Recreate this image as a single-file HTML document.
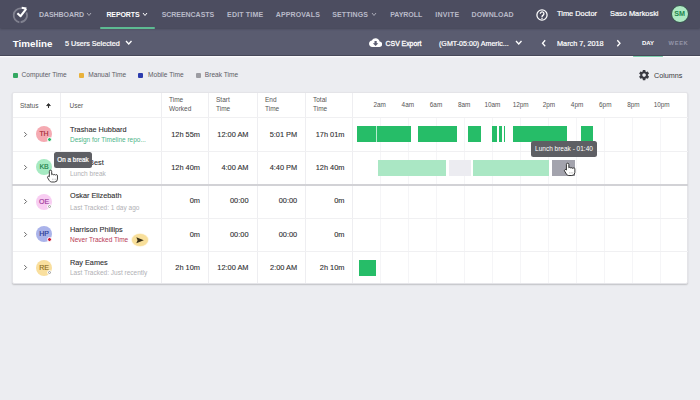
<!DOCTYPE html>
<html><head><meta charset="utf-8">
<style>
*{margin:0;padding:0;box-sizing:border-box}
html,body{width:700px;height:400px;overflow:hidden;background:#ecedf1;font-family:"Liberation Sans",sans-serif;position:relative}
.a{position:absolute;white-space:nowrap}
#nav{position:absolute;left:0;top:0;width:700px;height:28px;background:#4c4d60;box-shadow:0 1px 2px rgba(30,30,40,.35)}
#sub{position:absolute;left:0;top:28px;width:700px;height:28.3px;background:#5a5c70;box-shadow:inset 0 -1px 0 #474859,0 1.3px 0 #fbfbfd}
.nv{position:absolute;top:10px;font-size:7px;font-weight:bold;color:#b9bac8;line-height:9px}
.nv.on{color:#fff}
.wt{color:#fff}
#tbl{position:absolute;left:12px;top:92px;width:676px;height:192px;background:#fff;border:1px solid #e4e4e8;border-radius:2px;box-shadow:0 1px 1.5px rgba(0,0,0,.18)}
.hl{position:absolute;height:1px;background:#f0f0f2}
.vl{position:absolute;width:1px;background:#eeeef1}
.hd{position:absolute;font-size:6.5px;color:#555;line-height:8.5px}
.cell{position:absolute;font-size:7.4px;color:#2e2e30;text-align:right;line-height:9px;-webkit-text-stroke:0.1px #2e2e30}
.nm{position:absolute;font-size:7.3px;color:#2e2e30;line-height:9px;-webkit-text-stroke:0.1px #2e2e30}
.sm{position:absolute;font-size:6.5px;color:#aaa;line-height:8px}
.av{position:absolute;width:16px;height:16px;border-radius:50%;font-size:7px;text-align:center;line-height:15.5px;-webkit-text-stroke:0.15px currentColor;letter-spacing:-0.1px}
.hr{font-size:6.4px}
.dot{position:absolute;width:5px;height:5px;border-radius:50%;border:1px solid #fff}
.bar{position:absolute;top:126px;height:16px;background:#26bd68}
.bar2{position:absolute;top:160px;height:16px}
.chev{position:absolute;font-size:7px;color:#666}
</style></head><body>
<div id="sub"></div>
<div id="nav"></div>
<!-- logo -->
<svg class="a" style="left:5px;top:0.6px" width="30" height="28" viewBox="0 0 30 28">
 <path d="M21.34 11.34 A7 7 0 0 1 15.61 21.27 M14.39 21.27 A7 7 0 0 1 16.22 7.41" fill="none" stroke="#80818f" stroke-width="1.8"/>
 <path d="M12.4 12.2 L15.6 15.2 L21.2 7.8 M16.6 6.7 L21.4 7.6" fill="none" stroke="#fff" stroke-width="2.1" stroke-linejoin="round"/>
</svg>
<div class="nv" style="left:39px;letter-spacing:-0.062px">DASHBOARD</div>
<div class="nv on" style="left:106.4px;letter-spacing:-0.102px">REPORTS</div>
<div class="a" style="left:99.8px;top:26.9px;width:55.3px;height:2px;background:#5dba92;border-radius:1px"></div>
<div class="nv" style="left:161.7px;letter-spacing:-0.042px">SCREENCASTS</div>
<div class="nv" style="left:227.1px;letter-spacing:0.169px">EDIT TIME</div>
<div class="nv" style="left:275.7px;letter-spacing:0.144px">APPROVALS</div>
<div class="nv" style="left:332.3px;letter-spacing:0.086px">SETTINGS</div>
<div class="nv" style="left:390.2px;letter-spacing:-0.028px">PAYROLL</div>
<div class="nv" style="left:435.2px;letter-spacing:0.292px">INVITE</div>
<div class="nv" style="left:471.6px;letter-spacing:0.000px">DOWNLOAD</div>
<svg class="a" style="left:87.2px;top:12.6px;overflow:visible" width="4" height="2.5" viewBox="0 0 4 2.5"><path d="M0 0L2.0 2.5L4 0" fill="none" stroke="#a9aab6" stroke-width="1"/></svg><svg class="a" style="left:143px;top:12.6px;overflow:visible" width="4" height="2.5" viewBox="0 0 4 2.5"><path d="M0 0L2.0 2.5L4 0" fill="none" stroke="#fff" stroke-width="1"/></svg><svg class="a" style="left:371.5px;top:12.6px;overflow:visible" width="4" height="2.5" viewBox="0 0 4 2.5"><path d="M0 0L2.0 2.5L4 0" fill="none" stroke="#a9aab6" stroke-width="1"/></svg>
<!-- help -->
<svg class="a" style="left:536.3px;top:8.9px" width="12" height="12" viewBox="0 0 12 12"><circle cx="6" cy="6" r="5.1" fill="none" stroke="#fff" stroke-width="1.25"/><path d="M4.3 4.7A1.8 1.8 0 1 1 7.3 6C6.5 6.6 6 6.9 6 7.9" fill="none" stroke="#fff" stroke-width="1.3"/><circle cx="6" cy="9.3" r="0.8" fill="#fff"/></svg>
<div class="a wt" style="left:557px;top:9.4px;font-size:7.4px;line-height:9px;-webkit-text-stroke:0.2px #fff">Time Doctor</div>
<div class="a wt" style="left:610px;top:9.4px;font-size:7.4px;line-height:9px;-webkit-text-stroke:0.2px #fff">Saso Markoski</div>
<div class="a" style="left:670.7px;top:5.25px;width:18px;height:18px;border-radius:50%;background:#ade9c3;border:0.8px solid #34504a;color:#22874e;font-size:7.2px;font-weight:bold;text-align:center;line-height:16.4px">SM</div>

<!-- sub bar -->
<div class="a wt" style="left:12.8px;top:38px;font-size:9.8px;font-weight:bold;line-height:12px">Timeline</div>
<div class="a wt" style="left:65px;top:38.7px;font-size:7.2px;line-height:9px;-webkit-text-stroke:0.2px #fff">5 Users Selected</div>
<svg class="a" style="left:126px;top:41.2px;overflow:visible" width="5.5" height="3" viewBox="0 0 5.5 3"><path d="M0 0L2.75 3L5.5 0" fill="none" stroke="#fff" stroke-width="1.3"/></svg>
<svg class="a" style="left:369px;top:36.3px" width="13.2" height="13.2" viewBox="0 0 24 24"><path fill="#fff" fill-rule="evenodd" d="M19.35 10.04C18.67 6.59 15.64 4 12 4 9.11 4 6.6 5.64 5.35 8.04 2.34 8.36 0 10.91 0 14c0 3.31 2.69 6 6 6h13c2.76 0 5-2.24 5-5 0-2.64-2.05-4.78-4.65-4.96zM17 13l-5 5-5-5h3V9h4v4h3z"/></svg>
<div class="a wt" style="left:385.6px;top:38.8px;font-size:6.95px;letter-spacing:-0.05px;line-height:9px;-webkit-text-stroke:0.3px #fff">CSV Export</div>
<div class="a wt" style="left:439px;top:39.6px;font-size:7.1px;line-height:9px;-webkit-text-stroke:0.2px #fff">(GMT-05:00) Americ...</div>
<svg class="a" style="left:516px;top:41.1px;overflow:visible" width="5.5" height="3" viewBox="0 0 5.5 3"><path d="M0 0L2.75 3L5.5 0" fill="none" stroke="#fff" stroke-width="1.3"/></svg>
<svg class="a" style="left:541.5px;top:39.5px;overflow:visible" width="3.5" height="6.5"><path d="M3.2 0.3L0.5 3.25L3.2 6.2" fill="none" stroke="#fff" stroke-width="1.3"/></svg>
<div class="a wt" style="left:557px;top:39px;font-size:7.3px;line-height:9px;-webkit-text-stroke:0.2px #fff">March 7, 2018</div>
<svg class="a" style="left:617px;top:39.5px;overflow:visible" width="3.5" height="6.5"><path d="M0.3 0.3L3 3.25L0.3 6.2" fill="none" stroke="#fff" stroke-width="1.3"/></svg>
<div class="a wt" style="left:642px;top:39px;font-size:6px;font-weight:bold;line-height:8px">DAY</div>
<div class="a" style="left:668.6px;top:39px;font-size:5.8px;font-weight:bold;line-height:8px;color:#9495a8;letter-spacing:0.6px">WEEK</div>
<div class="a" style="left:633px;top:55.6px;width:30px;height:1.8px;background:#7fcfae;border-radius:1px"></div>

<!-- legend -->
<div class="a" style="left:12.9px;top:72.5px;width:5px;height:5px;border-radius:1px;background:#34a862"></div>
<div class="a" style="left:21.6px;top:70.7px;font-size:6.6px;color:#5c5c66;line-height:8px">Computer Time</div>
<div class="a" style="left:78.9px;top:72.5px;width:5px;height:5px;border-radius:1px;background:#e9b23c"></div>
<div class="a" style="left:88.3px;top:70.7px;font-size:6.6px;color:#5c5c66;line-height:8px">Manual Time</div>
<div class="a" style="left:137.9px;top:72.5px;width:5px;height:5px;border-radius:1px;background:#2c3cae"></div>
<div class="a" style="left:148px;top:70.7px;font-size:6.6px;color:#5c5c66;line-height:8px">Mobile Time</div>
<div class="a" style="left:195.9px;top:72.5px;width:5px;height:5px;border-radius:1px;background:#9c9ca2"></div>
<div class="a" style="left:204.8px;top:70.7px;font-size:6.6px;color:#5c5c66;line-height:8px">Break Time</div>
<svg class="a" style="left:637.9px;top:68.6px" width="12.2" height="12.2" viewBox="0 0 24 24"><path fill="#3a3a42" d="M19.4 13c.04-.33.06-.66.06-1s-.02-.67-.06-1l2.1-1.65c.2-.15.24-.42.12-.64l-2-3.46c-.12-.22-.39-.3-.61-.22l-2.49 1c-.52-.4-1.08-.73-1.69-.98l-.38-2.65C14.46 2.18 14.25 2 14 2h-4c-.25 0-.46.18-.49.42l-.38 2.65c-.61.25-1.17.59-1.69.98l-2.49-1c-.23-.09-.49 0-.61.22l-2 3.46c-.13.22-.07.49.12.64L4.57 11c-.04.33-.07.67-.07 1s.03.67.07 1l-2.11 1.65c-.19.15-.24.42-.12.64l2 3.46c.12.22.39.3.61.22l2.49-1c.52.4 1.08.73 1.69.98l.38 2.65c.03.24.24.42.49.42h4c.25 0 .46-.18.49-.42l.38-2.65c.61-.25 1.17-.59 1.69-.98l2.49 1c.23.09.49 0 .61-.22l2-3.46c.12-.22.07-.49-.12-.64L19.4 13zM12 15.5c-1.93 0-3.5-1.57-3.5-3.5s1.57-3.5 3.5-3.5 3.5 1.57 3.5 3.5-1.57 3.5-3.5 3.5z"/></svg>
<div class="a" style="left:654px;top:71px;font-size:7.2px;color:#3a3a42;line-height:9px">Columns</div>

<!-- table -->
<div id="tbl"></div>
<div class="vl" style="left:380px;top:118px;height:165px;background:#f5f5f7"></div>
<div class="vl" style="left:408px;top:118px;height:165px;background:#f5f5f7"></div>
<div class="vl" style="left:436px;top:118px;height:165px;background:#f5f5f7"></div>
<div class="vl" style="left:464px;top:118px;height:165px;background:#f5f5f7"></div>
<div class="vl" style="left:492px;top:118px;height:165px;background:#f5f5f7"></div>
<div class="vl" style="left:520px;top:118px;height:165px;background:#f5f5f7"></div>
<div class="vl" style="left:548px;top:118px;height:165px;background:#f5f5f7"></div>
<div class="vl" style="left:576px;top:118px;height:165px;background:#f5f5f7"></div>
<div class="vl" style="left:604px;top:118px;height:165px;background:#f5f5f7"></div>
<div class="vl" style="left:632px;top:118px;height:165px;background:#f5f5f7"></div>
<div class="vl" style="left:660px;top:118px;height:165px;background:#f5f5f7"></div>
<div class="vl" style="left:60px;top:93px;height:190px"></div>
<div class="vl" style="left:161px;top:93px;height:190px"></div>
<div class="vl" style="left:208px;top:93px;height:190px"></div>
<div class="vl" style="left:257px;top:93px;height:190px"></div>
<div class="vl" style="left:305px;top:93px;height:190px"></div>
<div class="vl" style="left:352px;top:93px;height:190px"></div>
<div class="hl" style="left:13px;top:117px;width:675px"></div>
<div class="hl" style="left:13px;top:150.5px;width:675px"></div>
<div class="hl" style="left:13px;top:218px;width:675px"></div>
<div class="hl" style="left:13px;top:251px;width:675px"></div>
<div class="hl" style="left:12px;top:183.5px;width:676px;height:2px;background:#d2d2d6"></div>
<div class="hd" style="left:20px;top:101.5px">Status</div>
<svg class="a" style="left:46.2px;top:102.8px" width="5" height="5.4" viewBox="0 0 5 5.4"><path d="M2.5 5.3V2M2.5 0.6L0.7 2.6H4.3Z" stroke="#333" stroke-width="1" fill="#333" stroke-linejoin="round"/></svg>
<div class="hd" style="left:69.5px;top:101.5px">User</div>
<div class="hd" style="left:169px;top:96px">Time<br>Worked</div>
<div class="hd" style="left:216px;top:96px">Start<br>Time</div>
<div class="hd" style="left:265px;top:96px">End<br>Time</div>
<div class="hd" style="left:313px;top:96px">Total<br>Time</div>
<div class="hd hr" style="left:359.60px;width:40px;text-align:center;top:101px">2am</div>
<div class="hd hr" style="left:387.81px;width:40px;text-align:center;top:101px">4am</div>
<div class="hd hr" style="left:416.02px;width:40px;text-align:center;top:101px">6am</div>
<div class="hd hr" style="left:444.23px;width:40px;text-align:center;top:101px">8am</div>
<div class="hd hr" style="left:472.44px;width:40px;text-align:center;top:101px">10am</div>
<div class="hd hr" style="left:500.65px;width:40px;text-align:center;top:101px">12pm</div>
<div class="hd hr" style="left:528.86px;width:40px;text-align:center;top:101px">2pm</div>
<div class="hd hr" style="left:557.07px;width:40px;text-align:center;top:101px">4pm</div>
<div class="hd hr" style="left:585.28px;width:40px;text-align:center;top:101px">6pm</div>
<div class="hd hr" style="left:613.49px;width:40px;text-align:center;top:101px">8pm</div>
<div class="hd hr" style="left:641.70px;width:40px;text-align:center;top:101px">10pm</div>
<svg class="a" style="left:23.5px;top:131.8px;overflow:visible" width="3" height="5"><path d="M0.3 0.2L2.6 2.5L0.3 4.8" fill="none" stroke="#666" stroke-width="1"/></svg>
<div class="av" style="left:36px;top:126.30000000000001px;background:#f5aab2;color:#a52c38">TH</div>
<div class="dot" style="left:46.7px;top:136.8px;width:5.2px;height:5.2px;border:0.9px solid #fff;background:#2ab964"></div>
<div class="nm" style="left:70px;top:124.5px">Trashae Hubbard</div>
<div class="sm" style="left:70px;top:136.4px;color:#4db487">Design for Timeline repo...</div>
<div class="cell" style="left:150px;width:50px;top:129.9px">12h 55m</div>
<div class="cell" style="left:198.5px;width:50px;top:129.9px">12:00 AM</div>
<div class="cell" style="left:247.2px;width:50px;top:129.9px">5:01 PM</div>
<div class="cell" style="left:294.5px;width:50px;top:129.9px">17h 01m</div>
<svg class="a" style="left:23.5px;top:164.7px;overflow:visible" width="3" height="5"><path d="M0.3 0.2L2.6 2.5L0.3 4.8" fill="none" stroke="#666" stroke-width="1"/></svg>
<div class="av" style="left:36px;top:159.2px;background:#a6eac2;color:#1e8048">KB</div>
<div class="nm" style="left:70px;top:157.8px">Kobe Best</div>
<div class="sm" style="left:70px;top:170.3px;color:#b0b0b4">Lunch break</div>
<div class="cell" style="left:150px;width:50px;top:162.7px">12h 40m</div>
<div class="cell" style="left:198.5px;width:50px;top:162.7px">4:00 AM</div>
<div class="cell" style="left:247.2px;width:50px;top:162.7px">4:40 PM</div>
<div class="cell" style="left:294.5px;width:50px;top:162.7px">12h 40m</div>
<svg class="a" style="left:23.5px;top:199.0px;overflow:visible" width="3" height="5"><path d="M0.3 0.2L2.6 2.5L0.3 4.8" fill="none" stroke="#666" stroke-width="1"/></svg>
<div class="av" style="left:36px;top:193.5px;background:#f8cdf2;color:#a03a9c">OE</div>
<div class="dot" style="left:47.5px;top:204.5px;background:#fff;border:0.8px solid #999;width:3.8px;height:3.8px;box-shadow:0 0 0 0.8px #fff"></div>
<div class="nm" style="left:70px;top:190.75px">Oskar Elizebath</div>
<div class="sm" style="left:70px;top:203.75px;color:#b0b0b4">Last Tracked: 1 day ago</div>
<div class="cell" style="left:150px;width:50px;top:196.3px">0m</div>
<div class="cell" style="left:198.5px;width:50px;top:196.3px">00:00</div>
<div class="cell" style="left:247.2px;width:50px;top:196.3px">00:00</div>
<div class="cell" style="left:294.5px;width:50px;top:196.3px">0m</div>
<svg class="a" style="left:23.5px;top:231.5px;overflow:visible" width="3" height="5"><path d="M0.3 0.2L2.6 2.5L0.3 4.8" fill="none" stroke="#666" stroke-width="1"/></svg>
<div class="av" style="left:36px;top:226px;background:#aab3ea;color:#25358f">HP</div>
<div class="dot" style="left:46.7px;top:236.5px;width:5.2px;height:5.2px;border:0.9px solid #fff;background:#c8102e"></div>
<div class="nm" style="left:70px;top:224.75px">Harrison Phillips</div>
<div class="sm" style="left:70px;top:236.25px;color:#b83a55">Never Tracked Time</div>
<div class="cell" style="left:150px;width:50px;top:229.5px">0m</div>
<div class="cell" style="left:198.5px;width:50px;top:229.5px">00:00</div>
<div class="cell" style="left:247.2px;width:50px;top:229.5px">00:00</div>
<div class="cell" style="left:294.5px;width:50px;top:229.5px">0m</div>
<svg class="a" style="left:23.5px;top:265.2px;overflow:visible" width="3" height="5"><path d="M0.3 0.2L2.6 2.5L0.3 4.8" fill="none" stroke="#666" stroke-width="1"/></svg>
<div class="av" style="left:36px;top:259.7px;background:#f9df9e;color:#8a6a1c">RE</div>
<div class="dot" style="left:47.5px;top:270.7px;background:#fff;border:0.8px solid #999;width:3.8px;height:3.8px;box-shadow:0 0 0 0.8px #fff"></div>
<div class="nm" style="left:70px;top:258.25px">Ray Eames</div>
<div class="sm" style="left:70px;top:269.25px;color:#b0b0b4">Last Tracked: Just recently</div>
<div class="cell" style="left:150px;width:50px;top:262.7px">2h 10m</div>
<div class="cell" style="left:198.5px;width:50px;top:262.7px">12:00 AM</div>
<div class="cell" style="left:247.2px;width:50px;top:262.7px">2:00 AM</div>
<div class="cell" style="left:294.5px;width:50px;top:262.7px">2h 10m</div>
<div class="bar" style="left:357px;width:54.19999999999999px"></div>
<div class="bar" style="left:417.5px;width:39.80000000000001px"></div>
<div class="bar" style="left:468.3px;width:12.300000000000011px"></div>
<div class="bar" style="left:492px;width:5px"></div>
<div class="bar" style="left:498.9px;width:2.900000000000034px"></div>
<div class="bar" style="left:503.7px;width:1.6999999999999886px"></div>
<div class="bar" style="left:512.9px;width:54.200000000000045px"></div>
<div class="bar" style="left:580.6px;width:12.299999999999955px"></div>
<div class="bar2" style="left:377.5px;width:68.89999999999998px;background:#aae7c4"></div>
<div class="bar2" style="left:449px;width:21.69999999999999px;background:#ececf1"></div>
<div class="bar2" style="left:473.2px;width:76.09999999999997px;background:#aae7c4"></div>
<div class="bar2" style="left:551.6px;width:23.399999999999977px;background:#a3a3ad"></div>
<div class="a" style="left:359px;top:260.4px;width:17px;height:15.3px;background:#26bd68"></div>
<div class="a" style="left:376px;top:126px;width:0.8px;height:16px;background:#b8ecd0"></div>
<div class="a" style="left:132.4px;top:234.2px;width:15.8px;height:12px;border-radius:50%;background:#f8df9a;box-shadow:0 0 1px 0.5px #fbeabd"></div>
<svg class="a" style="left:136.2px;top:237px" width="8" height="6.6" viewBox="0 0 8 6.6"><path d="M0.3 0.3L7.8 3.3L0.3 6.3L1.6 3.3Z" fill="#3a3118"/></svg>
<div class="a" style="left:53.8px;top:152px;width:38.5px;height:15.7px;background:#5e5f64;border-radius:2.5px;color:#fff;font-size:6.35px;line-height:16px;text-align:center;-webkit-text-stroke:0.2px #fff">On a break</div>
<div class="a" style="left:531.4px;top:140.8px;width:65.2px;height:15.8px;background:#5e5f64;border-radius:2.5px;color:#fff;font-size:6.5px;line-height:15.8px;text-align:center">Lunch break - 01:40</div>
<svg class="a" style="left:46.6px;top:170px;overflow:visible" width="10.6" height="12" viewBox="0 0 10 11.4"><path d="M2.2 1.3a1.1 1.1 0 0 1 2.2 0V4.4a1 1 0 0 1 1.8.3a1 1 0 0 1 1.8.3a1 1 0 0 1 1.9.6V8.6q0 2.8-2.8 2.8H4.3q-1.3 0-2.1-1.3L0.5 7.3a0.9 0.9 0 0 1 1.7-.9Z" fill="#fff" stroke="#2a2a2a" stroke-width="0.85" stroke-linejoin="round"/><path d="M5.2 9.6V8.2M6.6 9.6V8.2M8 9.6V8.2" stroke="#aaa" stroke-width="0.5"/></svg>
<svg class="a" style="left:564px;top:163px;overflow:visible" width="11" height="13.2" viewBox="0 0 10 12"><path d="M2.2 1.3a1.1 1.1 0 0 1 2.2 0V4.4a1 1 0 0 1 1.8.3a1 1 0 0 1 1.8.3a1 1 0 0 1 1.9.6V8.6q0 2.8-2.8 2.8H4.3q-1.3 0-2.1-1.3L0.5 7.3a0.9 0.9 0 0 1 1.7-.9Z" fill="#fff" stroke="#2a2a2a" stroke-width="0.85" stroke-linejoin="round"/><path d="M5.2 9.6V8.2M6.6 9.6V8.2M8 9.6V8.2" stroke="#aaa" stroke-width="0.5"/></svg>
</body></html>
